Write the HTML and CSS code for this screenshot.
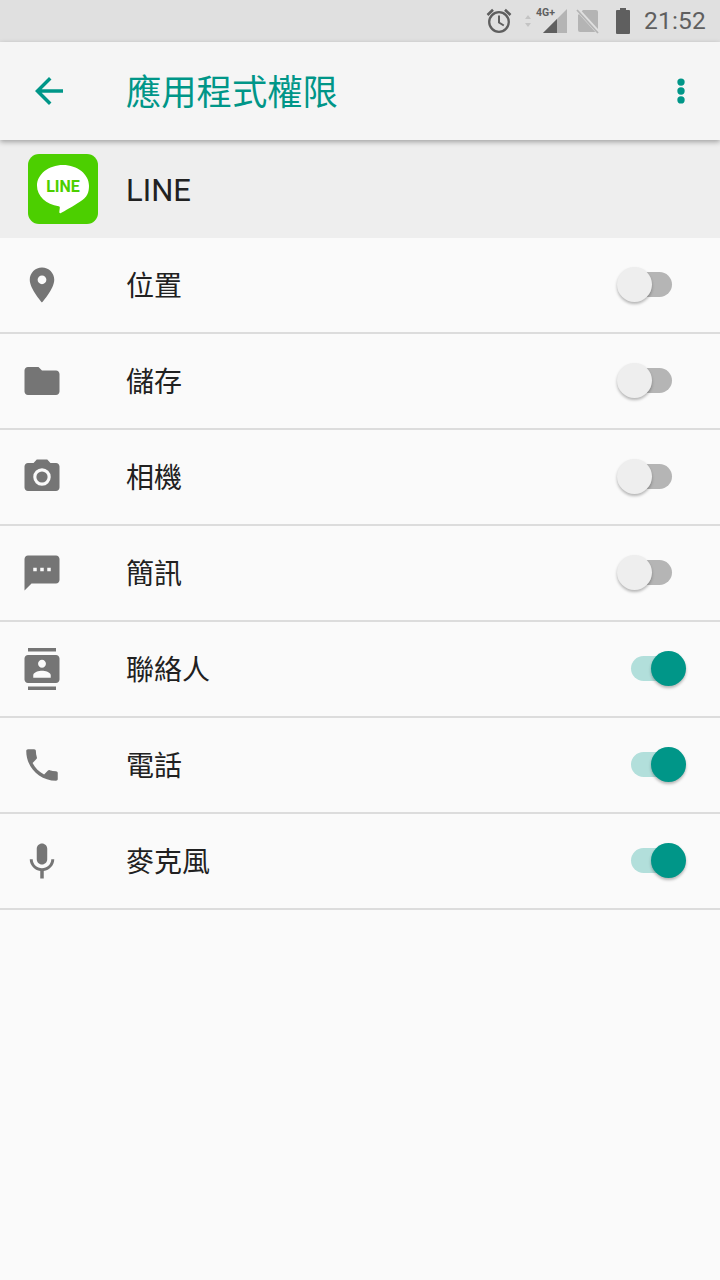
FILE: index.html
```html
<!DOCTYPE html>
<html lang="zh-Hant">
<head>
<meta charset="utf-8">
<title>應用程式權限</title>
<link rel="stylesheet" href="styles.css">
</head>
<body>
<div class="screen">
  <div class="statusbar">
    <svg class="st-alarm" viewBox="0 0 28 28"><path d="M2.500 8 8 2.800M25.500 8 20 2.800" fill="none" stroke="#5f5f5f" stroke-width="2.600"/><circle cx="14" cy="15" r="9.800" fill="none" stroke="#5f5f5f" stroke-width="2.300"/><path d="M14 8.500v7l4.800 3" fill="none" stroke="#5f5f5f" stroke-width="2"/></svg>
    <svg class="st-arrows" viewBox="0 0 8 14"><path d="M4 1 7 5H1zM4 13 1 9h6z" fill="#c4c4c4"/></svg>
    <div class="st-signal">
      <span class="st-4g">4G+</span>
      <svg class="st-tri" viewBox="0 0 26 26"><path d="M25 1v24H1z" fill="#b4b4b4"/><path d="M15 11v14H1z" fill="#5f5f5f"/></svg>
    </div>
    <svg class="st-sim" viewBox="0 0 24 26"><path d="M7 2h13a2 2 0 0 1 2 2v20H4a2 2 0 0 1-2-2V7z" fill="#b4b4b4"/><path d="M1 1 23 25" stroke="#e0e0e0" stroke-width="4"/><path d="M1 2 22 25" stroke="#b4b4b4" stroke-width="1.800"/></svg>
    <svg class="st-batt" viewBox="0 0 16 26"><path d="M5 0h6v2h3a1 1 0 0 1 1 1v22a1 1 0 0 1-1 1H2a1 1 0 0 1-1-1V3a1 1 0 0 1 1-1h3z" fill="#5f5f5f"/></svg>
    <span class="st-time">21:52</span>
  </div>

  <header class="appbar">
    <svg class="back" viewBox="0 0 24 24"><path d="M20 11H7.830l5.590-5.590L12 4l-8 8 8 8 1.410-1.410L7.830 13H20z"/></svg>
    <h1 class="title">應用程式權限</h1>
    <svg class="more" viewBox="0 0 24 24"><circle cx="12" cy="6.900" r="2.100"/><circle cx="12" cy="12" r="2.100"/><circle cx="12" cy="17.100" r="2.100"/></svg>
  </header>

  <div class="apphead">
    <div class="lineicon">
      <svg viewBox="0 0 70 70"><path d="M35 11C20.600 11 9 20.300 9 31.800c0 10.300 9.200 18.900 21.700 20.500 .9 .2 1.200 .6 1.100 1.500l-.5 4.300c-.1 1 .6 1.500 1.600 1 3-1.500 13-7.300 19-11.300C59.500 43.500 61 38 61 31.800 61 20.300 49.400 11 35 11z" fill="#fff"/></svg>
      <span class="lineword">LINE</span>
    </div>
    <span class="label applabel">LINE</span>
  </div>

  <ul class="list">
    <li class="row">
      <svg class="icon" viewBox="0 0 24 24"><path d="M12 2C8.130 2 5 5.130 5 9c0 5.250 7 13 7 13s7-7.750 7-13c0-3.870-3.130-7-7-7zm0 9.500a2.500 2.500 0 0 1 0-5 2.500 2.500 0 0 1 0 5z"/></svg>
      <span class="label">位置</span>
      <span class="switch"><span class="track"></span><span class="thumb"></span></span>
    </li>
    <li class="row">
      <svg class="icon" viewBox="0 0 24 24"><path d="M10 4H4c-1.100 0-2 .9-2 2v12c0 1.100 .9 2 2 2h16c1.100 0 2-.9 2-2V8c0-1.100-.9-2-2-2h-8l-2-2z"/></svg>
      <span class="label">儲存</span>
      <span class="switch"><span class="track"></span><span class="thumb"></span></span>
    </li>
    <li class="row">
      <svg class="icon" viewBox="0 0 24 24"><path d="M9 2 7.170 4H4c-1.100 0-2 .9-2 2v12c0 1.100 .9 2 2 2h16c1.100 0 2-.9 2-2V6c0-1.100-.9-2-2-2h-3.170L15 2H9zm3 15a5 5 0 1 1 0-10 5 5 0 0 1 0 10z"/><circle cx="12" cy="12" r="3.200"/></svg>
      <span class="label">相機</span>
      <span class="switch"><span class="track"></span><span class="thumb"></span></span>
    </li>
    <li class="row">
      <svg class="icon" viewBox="0 0 24 24"><path d="M20 2H4c-1.100 0-1.990 .9-1.990 2L2 22l4-4h14c1.100 0 2-.9 2-2V4c0-1.100-.9-2-2-2zM9 11H7V9h2v2zm4 0h-2V9h2v2zm4 0h-2V9h2v2z"/></svg>
      <span class="label">簡訊</span>
      <span class="switch"><span class="track"></span><span class="thumb"></span></span>
    </li>
    <li class="row">
      <svg class="icon" viewBox="0 0 24 24"><path d="M20 0H4v2h16V0zM4 24h16v-2H4v2zM20 4H4c-1.100 0-2 .9-2 2v12c0 1.100 .9 2 2 2h16c1.100 0 2-.9 2-2V6c0-1.100-.9-2-2-2zm-8 2.750c1.240 0 2.250 1.010 2.250 2.250s-1.010 2.250-2.250 2.250S9.750 10.240 9.750 9 10.760 6.750 12 6.750zM17 17H7v-1.500c0-1.670 3.330-2.500 5-2.500s5 .83 5 2.500V17z"/></svg>
      <span class="label">聯絡人</span>
      <span class="switch on"><span class="track"></span><span class="thumb"></span></span>
    </li>
    <li class="row">
      <svg class="icon" viewBox="0 0 24 24"><path d="M6.620 10.790c1.440 2.830 3.760 5.140 6.590 6.590l2.200-2.200c.27-.27 .67-.36 1.020-.24 1.120 .37 2.330 .57 3.570 .57 .55 0 1 .45 1 1V20c0 .55-.45 1-1 1-9.390 0-17-7.610-17-17 0-.55 .45-1 1-1h3.500c.55 0 1 .45 1 1 0 1.250 .2 2.450 .57 3.570 .11 .35 .03 .74-.25 1.020l-2.200 2.200z"/></svg>
      <span class="label">電話</span>
      <span class="switch on"><span class="track"></span><span class="thumb"></span></span>
    </li>
    <li class="row">
      <svg class="icon" viewBox="0 0 24 24"><path d="M12 14c1.660 0 2.990-1.340 2.990-3L15 5c0-1.660-1.340-3-3-3S9 3.340 9 5v6c0 1.660 1.340 3 3 3zm5.300-3c0 3-2.540 5.100-5.300 5.100S6.700 14 6.700 11H5c0 3.410 2.720 6.230 6 6.720V22h2v-4.280c3.280-.48 6-3.300 6-6.720h-1.700z"/></svg>
      <span class="label">麥克風</span>
      <span class="switch on"><span class="track"></span><span class="thumb"></span></span>
    </li>
  </ul>
</div>
</body>
</html>
```

FILE: styles.css
```css
* { box-sizing: border-box; }
html, body { margin: 0; padding: 0; }
body {
  width: 720px;
  height: 1280px;
  overflow: hidden;
  background: #fafafa;
  font-family: Roboto, "Noto Sans CJK TC", sans-serif;
}
.screen { width: 720px; height: 1280px; display: flex; flex-direction: column; background: #fafafa; }

.statusbar {
  height: 42px;
  flex: none;
  background: #e0e0e0;
  display: flex;
  align-items: center;
  justify-content: flex-end;
  padding-right: 14px;
}
.st-alarm { width: 28px; height: 28px; margin-right: 11px; margin-top: -1px; }
.st-arrows { width: 8px; height: 14px; margin-right: 4px; }
.st-signal { position: relative; width: 32px; height: 28px; margin-right: 8px; }
.st-tri { position: absolute; right: 0; bottom: 1px; width: 26px; height: 26px; }
.st-4g { position: absolute; left: 0; top: 0; font: 700 10.500px/12px Roboto, sans-serif; color: #5f5f5f; white-space: nowrap; }
.st-sim { width: 24px; height: 26px; margin-right: 15px; margin-top: -1px; }
.st-batt { width: 16px; height: 26px; margin-right: 13px; }
.st-time { font-size: 24.500px; line-height: 28px; color: #5f5f5f; letter-spacing: 0.2px; }

.appbar {
  height: 98px;
  flex: none;
  background: #f5f5f5;
  display: flex;
  align-items: center;
  position: relative;
  z-index: 1;
  box-shadow: 0 2px 5px rgba(0,0,0,.32);
}
.back { width: 42px; height: 42px; margin-left: 28px; fill: #009688; flex: none; }
.title {
  margin: 0 0 0 56px;
  padding-bottom: 2px;
  flex: 1;
  font-size: 35.300px;
  line-height: 48px;
  font-weight: 400;
  color: #009688;
  font-family: "Noto Sans CJK TC", sans-serif;
}
.more { width: 42px; height: 42px; margin-right: 18px; fill: #009688; flex: none; }

.apphead {
  height: 98px;
  flex: none;
  background: #eeeeee;
  display: flex;
  align-items: center;
  padding-left: 28px;
}
.lineicon {
  width: 70px;
  height: 70px;
  margin-right: 28px;
  border-radius: 11px;
  background: #4ccf00;
  position: relative;
  flex: none;
}
.lineicon svg { display: block; width: 70px; height: 70px; }
.lineword {
  position: absolute;
  left: 0;
  right: 0;
  top: 24px;
  text-align: center;
  font: 700 16px/18px Roboto, sans-serif;
  color: #4ccf00;
}
.label {
  font-size: 28px;
  line-height: 40px;
  padding-top: 4px;
  color: #212121;
  font-family: Roboto, "Noto Sans CJK TC", sans-serif;
}
.applabel { font-size: 31px; padding-top: 3px; }

.list { margin: 0; padding: 0; list-style: none; }
.row {
  height: 96px;
  display: flex;
  align-items: center;
  padding-left: 20.500px;
  border-bottom: 2px solid #dcdcdc;
}
.row .icon { width: 42px; height: 42px; margin-right: 63.500px; fill: #757575; flex: none; }
.row .label { flex: 1; }

.switch {
  position: relative;
  display: block;
  flex: none;
  width: 69px;
  height: 35px;
  margin-right: 34px;
  margin-top: -1px;
}
.track {
  position: absolute;
  left: 8px;
  right: 14px;
  top: 5px;
  height: 25px;
  border-radius: 12.500px;
  background: #b5b5b5;
}
.thumb {
  position: absolute;
  left: 0;
  top: 0;
  width: 35px;
  height: 35px;
  border-radius: 50%;
  background: #eeeeee;
  box-shadow: 0 2px 3px rgba(0,0,0,.28);
}
.on .track { left: 14px; right: 8px; background: #b2dfdb; }
.on .thumb { left: auto; right: 0; background: #009688; }
```
